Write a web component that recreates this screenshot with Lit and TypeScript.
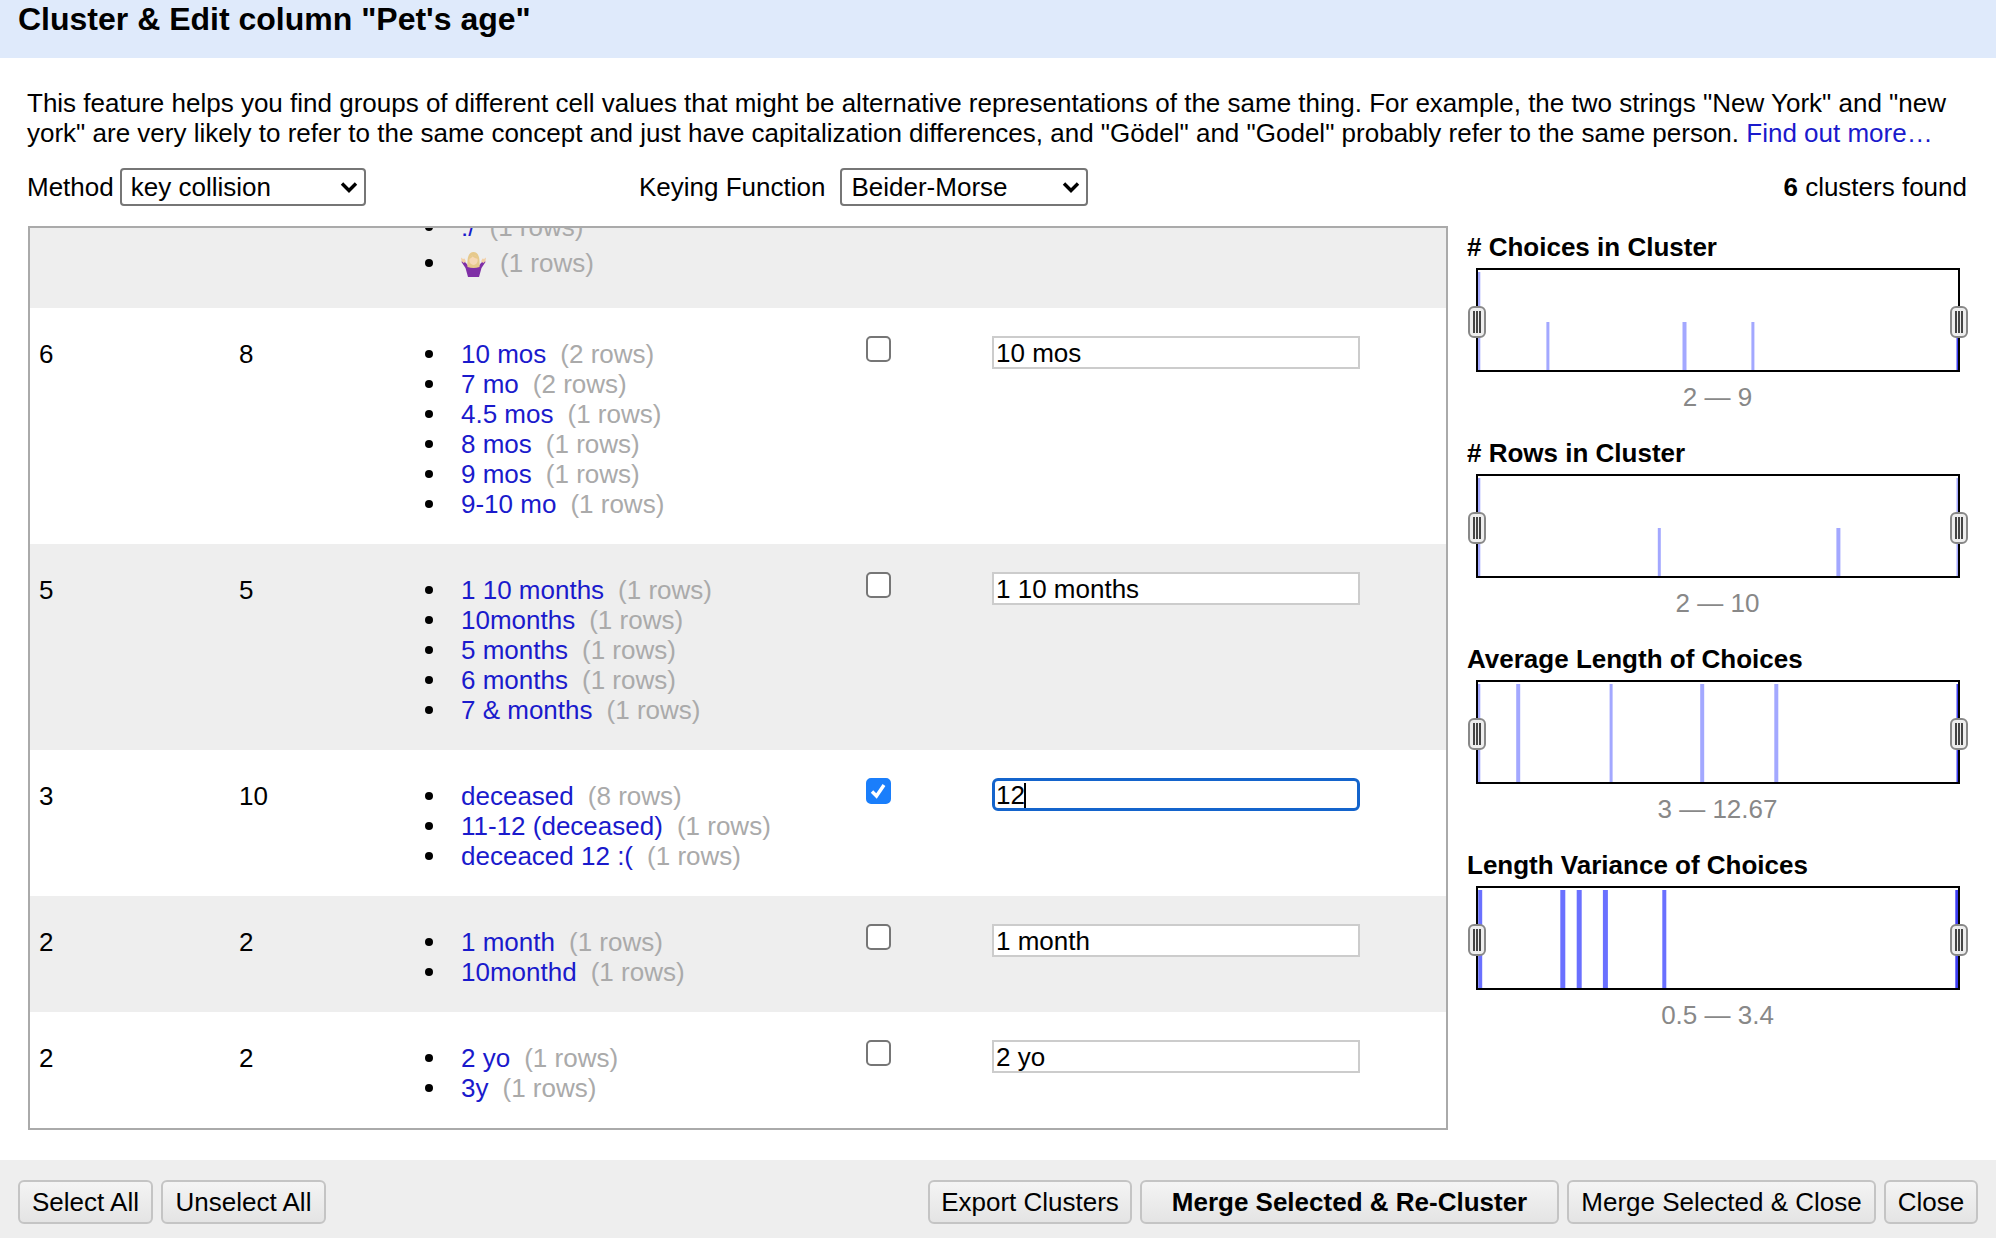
import { LitElement, html, css, svg } from "lit";
import { customElement } from "lit/decorators.js";

type Choice = { v: string; n: number; emoji?: boolean };
type Cluster = { size: number; rows: number; choices: Choice[]; value: string; checked?: boolean; first?: boolean };
type Bar = { x: number; h: number; w: number; c: string };

const L = "#a3a8ff";
const D = "#3c3cf0";
const M = "#6a70ff";
const clusters: Cluster[] = [
  { size: 0, rows: 0, first: true, value: "", choices: [{ v: ":/", n: 1 }, { v: "", n: 1, emoji: true }] },
  { size: 6, rows: 8, value: "10 mos", choices: [{ v: "10 mos", n: 2 }, { v: "7 mo", n: 2 }, { v: "4.5 mos", n: 1 }, { v: "8 mos", n: 1 }, { v: "9 mos", n: 1 }, { v: "9-10 mo", n: 1 }] },
  { size: 5, rows: 5, value: "1 10 months", choices: [{ v: "1 10 months", n: 1 }, { v: "10months", n: 1 }, { v: "5 months", n: 1 }, { v: "6 months", n: 1 }, { v: "7 & months", n: 1 }] },
  { size: 3, rows: 10, value: "12", checked: true, choices: [{ v: "deceased", n: 8 }, { v: "11-12 (deceased)", n: 1 }, { v: "deceaced 12 :(", n: 1 }] },
  { size: 2, rows: 2, value: "1 month", choices: [{ v: "1 month", n: 1 }, { v: "10monthd", n: 1 }] },
  { size: 2, rows: 2, value: "2 yo", choices: [{ v: "2 yo", n: 1 }, { v: "3y", n: 1 }] },
];

const hists: { title: string; range: string; bars: Bar[] }[] = [
  { title: "# Choices in Cluster", range: "2 — 9", bars: [
    { x: 1478.3, h: 98, w: 3, c: L }, { x: 1547.4, h: 48, w: 3, c: L }, { x: 1684, h: 48, w: 4, c: L }, { x: 1752.4, h: 48, w: 3, c: L }, { x: 1957.5, h: 48, w: 3, c: D } ] },
  { title: "# Rows in Cluster", range: "2 — 10", bars: [
    { x: 1478.3, h: 98, w: 3, c: L }, { x: 1658.8, h: 48, w: 3, c: L }, { x: 1837.9, h: 48, w: 4, c: L }, { x: 1957.5, h: 98, w: 3, c: L } ] },
  { title: "Average Length of Choices", range: "3 — 12.67", bars: [
    { x: 1478.3, h: 98, w: 3, c: L }, { x: 1517.7, h: 98, w: 4, c: L }, { x: 1610.6, h: 98, w: 3, c: L }, { x: 1701.7, h: 98, w: 4, c: L }, { x: 1775.8, h: 98, w: 4, c: L }, { x: 1957.5, h: 98, w: 3, c: D } ] },
  { title: "Length Variance of Choices", range: "0.5 — 3.4", bars: [
    { x: 1479.7, h: 98, w: 4, c: M }, { x: 1562.3, h: 98, w: 5, c: M }, { x: 1578.7, h: 98, w: 5, c: M }, { x: 1604.9, h: 98, w: 5, c: M }, { x: 1663.8, h: 98, w: 4, c: M }, { x: 1956.8, h: 98, w: 4, c: D } ] },
];

@customElement("app-root")
export class AppRoot extends LitElement {
  static styles = css`
    :host { display: block; width: 1996px; height: 1238px; overflow: hidden; background: #fff; color: #000;
      font-family: "Liberation Sans", Arial, sans-serif; font-size: 26px; line-height: 30px; }
    * { box-sizing: border-box; }
    .app { display: flex; flex-direction: column; height: 1238px; }
    .header { height: 58px; background: #dfeafb; padding: 0 18px; font-size: 32px; font-weight: 700; line-height: 38px; flex: none; }
    .desc { margin: 30px 27px 0; line-height: 30px; height: 60px; }
    a { color: #1a1acc; text-decoration: none; }
    .controls { display: grid; grid-template-columns: 612px 1fr auto; align-items: center; padding: 0 29px 0 27px; margin-top: 20px; height: 38px; }
    .field { display: flex; align-items: center; gap: 6px; }
    .field.wide { gap: 15px; }
    .selwrap { position: relative; display: block; height: 38px; }
    select { appearance: none; -webkit-appearance: none; height: 38px; background: #fff; border: 2px solid #767676; border-radius: 4px;
      font: inherit; color: #000; padding: 0 0 0 9px; display: block; }
    select.method { width: 246px; }
    select.keying { width: 248px; }
    .selwrap svg { position: absolute; right: 8px; top: 13px; pointer-events: none; }
    .main { display: flex; margin: 20px 0 0 28px; height: 904px; }
    .table { width: 1420px; height: 904px; flex: none; border: 2px solid #aaa; overflow: hidden; }
    .row { display: grid; grid-template-columns: 200px 186px 441px 126px 368px; padding: 28px 0 25px 9px; }
    .row.alt { background: #eee; }
    .row.first { padding: 0 0 30px 9px; height: 80px; }
    .cell { padding-top: 3px; }
    ul { margin: 0; padding: 0 0 0 36px; list-style: none; }
    li { position: relative; }
    li::before { content: ""; position: absolute; left: -36px; top: 11px; width: 8px; height: 8px; border-radius: 50%; background: #000; }
    li.em { padding-top: 6px; }
    li.em::before { top: 17px; }
    .row.first ul { margin-top: -16px; }
    .count { color: #aaa; margin-left: 14px; }
    .emoji { display: inline-block; vertical-align: -5px; }
    .checkwrap { position: relative; width: 25px; height: 26px; }
    input[type="checkbox"] { appearance: none; -webkit-appearance: none; display: block; margin: 0; width: 25px; height: 26px;
      background: #fff; border: 2px solid #767676; border-radius: 5px; }
    input[type="checkbox"]:checked { background: #1a7efb; border-color: #1a7efb; }
    .checkwrap svg { position: absolute; left: 4px; top: 5px; pointer-events: none; }
    .editwrap { position: relative; width: 368px; height: 33px; }
    input[type="text"] { display: block; width: 100%; height: 33px; font: inherit; color: #000; border: 2px solid #ccc; border-radius: 0;
      padding: 2px 2px 0; background: #fff; outline: none; }
    input[type="text"].focus { border: 3px solid #1464cc; border-radius: 6px; padding: 1px 1px 0; caret-color: transparent; }
    .caret { position: absolute; left: 32px; top: 5px; width: 2px; height: 25px; background: #000; }
    .side { padding: 6px 0 0 19px; flex: none; width: 530px; }
    .facet { margin-bottom: 26px; }
    .facet h3 { margin: 0; font-size: 26px; line-height: 30px; font-weight: 700; white-space: nowrap; }
    .hist { position: relative; margin: 6px 0 10px 9px; width: 484px; height: 104px; border: 2px solid #000; }
    .hist svg { display: block; position: absolute; left: 0; top: 0; }
    .handle { position: absolute; top: 36px; width: 18px; height: 32px; border: 2px solid #888; border-radius: 6px; background: #eee;
      display: flex; justify-content: center; gap: 1px; padding: 3px 0; }
    .handle i { display: block; width: 2px; background: #444; }
    .handle.l { left: -10px; }
    .handle.r { right: -10px; }
    .range { text-align: center; color: #888; margin-left: 9px; width: 483px; }
    .footer { flex: none; margin-top: 30px; height: 78px; background: #eee; display: flex; justify-content: space-between; padding: 20px 18px 0 18px; }
    .group { display: flex; gap: 8px; }
    button { height: 44px; font: inherit; color: #000; background: linear-gradient(#f4f4f4, #e4e4e4); border: 2px solid #c4c4c4; border-radius: 6px; padding: 0; line-height: 38px; }
    button.b { font-weight: 700; }
    .w-sel { width: 135px; } .w-uns { width: 165px; } .w-exp { width: 204px; } .w-mrc { width: 419px; } .w-mcl { width: 309px; } .w-cls { width: 94px; }
  `;

  private chevron() {
    return html`<svg width="18" height="12" viewBox="0 0 18 12"><path d="M2 2.5 L9 9.5 L16 2.5" fill="none" stroke="#000" stroke-width="3.4"/></svg>`;
  }

  private emoji() {
    return html`<svg class="emoji" width="25" height="25" viewBox="0 0 25 25">
      <path d="M5 11 L1.5 8 L0.5 10 L4.5 16 L7 25 L18 25 L20.5 16 L24.5 10 L23.5 8 L20 11 L17 15 L8 15 Z" fill="#7f2fa6"/>
      <path d="M0.5 9 L0 5.5 L2 7 L3.5 6.5 L5 9.5 L2.5 11 Z" fill="#f2cfa6"/>
      <path d="M24.5 9 L25 5.5 L23 7 L21.5 6.5 L20 9.5 L22.5 11 Z" fill="#f2cfa6"/>
      <path d="M6.5 15 Q5.5 0 12.5 0 Q19.5 0 18.5 15 Q15.5 16 12.5 16 Q9.5 16 6.5 15 Z" fill="#e6c98c"/>
      <ellipse cx="12.5" cy="8" rx="4.2" ry="5" fill="#f6d8b6"/>
      <path d="M8 7 Q9 2.5 13 3 Q16.5 3.5 17 7 Q13.5 6.4 11.5 4.6 Q10.5 6.4 8 7 Z" fill="#e6c98c"/>
    </svg>`;
  }

  private renderRow(c: Cluster, i: number) {
    return html`<div class="row ${i % 2 === 0 ? "alt" : ""} ${c.first ? "first" : ""}">
      <div class="cell">${c.first ? "" : c.size}</div>
      <div class="cell">${c.first ? "" : c.rows}</div>
      <div class="${c.first ? "" : "cell"}">
        <ul>${c.choices.map((h) => html`<li class="${h.emoji ? "em" : ""}">${h.emoji ? this.emoji() : html`<a href="#">${h.v}</a>`}<span class="count">(${h.n} rows)</span></li>`)}</ul>
      </div>
      <div>${c.first ? "" : html`<div class="checkwrap"><input type="checkbox" .checked=${!!c.checked} />${c.checked
        ? html`<svg width="17" height="16" viewBox="0 0 17 16"><path d="M2 8.5 L6.5 13 L14 2" fill="none" stroke="#fff" stroke-width="3.4"/></svg>` : ""}</div>`}</div>
      <div>${c.first ? "" : html`<div class="editwrap"><input type="text" class="${c.checked ? "focus" : ""}" .value=${c.value} />${c.checked ? html`<span class="caret"></span>` : ""}</div>`}</div>
    </div>`;
  }

  private renderHist(h: { title: string; range: string; bars: Bar[] }) {
    const left = 1478.5;
    return html`<div class="facet">
      <h3>${h.title}</h3>
      <div class="hist">
        <svg width="480" height="100" viewBox="0 0 480 100">
          ${h.bars.map((b) => svg`<rect x=${b.x - left - b.w / 2 + 1} y=${100 - b.h} width=${b.w} height=${b.h} fill=${b.c}></rect>`)}
        </svg>
        <div class="handle l"><i></i><i></i><i></i></div>
        <div class="handle r"><i></i><i></i><i></i></div>
      </div>
      <div class="range">${h.range}</div>
    </div>`;
  }

  render() {
    return html`<div class="app">
      <div class="header">Cluster &amp; Edit column "Pet's age"</div>
      <div class="desc">This feature helps you find groups of different cell values that might be alternative representations of the same thing. For example, the two strings "New York" and "new york" are very likely to refer to the same concept and just have capitalization differences, and "Gödel" and "Godel" probably refer to the same person. <a href="#">Find out more…</a></div>
      <div class="controls">
        <div class="field"><span>Method</span>
          <span class="selwrap"><select class="method"><option>key collision</option></select>${this.chevron()}</span></div>
        <div class="field wide"><span>Keying Function</span>
          <span class="selwrap"><select class="keying"><option>Beider-Morse</option></select>${this.chevron()}</span></div>
        <div><b>6</b> clusters found</div>
      </div>
      <div class="main">
        <div class="table">${clusters.map((c, i) => this.renderRow(c, i))}</div>
        <div class="side">${hists.map((h) => this.renderHist(h))}</div>
      </div>
      <div class="footer">
        <div class="group">
          <button class="w-sel">Select All</button>
          <button class="w-uns">Unselect All</button>
        </div>
        <div class="group">
          <button class="w-exp">Export Clusters</button>
          <button class="b w-mrc">Merge Selected &amp; Re-Cluster</button>
          <button class="w-mcl">Merge Selected &amp; Close</button>
          <button class="w-cls">Close</button>
        </div>
      </div>
    </div>`;
  }
}
